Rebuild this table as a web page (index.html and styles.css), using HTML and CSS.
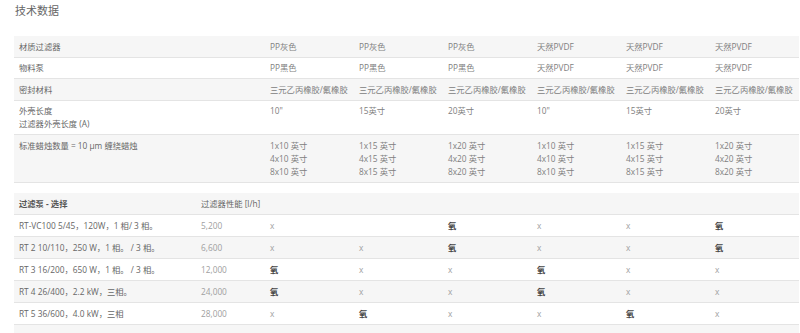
FILE: index.html
```html
<!DOCTYPE html>
<html lang="zh-CN">
<head>
    <meta charset="UTF-8">
    <title>技术数据</title>
    <link rel="stylesheet" href="styles.css">
</head>
<body>
    <div class="tech-data">
        <h2>技术数据</h2>

        <table class="spec-table">
            <colgroup>
                <col class="col-label">
                <col><col><col><col><col><col>
            </colgroup>
            <tr>
                <td class="label">材质过滤器</td>
                <td>PP灰色</td><td>PP灰色</td><td>PP灰色</td>
                <td>天然PVDF</td><td>天然PVDF</td><td>天然PVDF</td>
            </tr>
            <tr>
                <td class="label">物料泵</td>
                <td>PP黑色</td><td>PP黑色</td><td>PP黑色</td>
                <td>天然PVDF</td><td>天然PVDF</td><td>天然PVDF</td>
            </tr>
            <tr>
                <td class="label">密封材料</td>
                <td>三元乙丙橡胶/氟橡胶</td><td>三元乙丙橡胶/氟橡胶</td><td>三元乙丙橡胶/氟橡胶</td>
                <td>三元乙丙橡胶/氟橡胶</td><td>三元乙丙橡胶/氟橡胶</td><td>三元乙丙橡胶/氟橡胶</td>
            </tr>
            <tr>
                <td class="label">外壳长度<br>过滤器外壳长度 (A)</td>
                <td>10"</td><td>15英寸</td><td>20英寸</td>
                <td>10"</td><td>15英寸</td><td>20英寸</td>
            </tr>
            <tr>
                <td class="label">标准蜡烛数量 = 10 μm 缠绕蜡烛</td>
                <td>1x10 英寸<br>4x10 英寸<br>8x10 英寸</td>
                <td>1x15 英寸<br>4x15 英寸<br>8x15 英寸</td>
                <td>1x20 英寸<br>4x20 英寸<br>8x20 英寸</td>
                <td>1x10 英寸<br>4x10 英寸<br>8x10 英寸</td>
                <td>1x15 英寸<br>4x15 英寸<br>8x15 英寸</td>
                <td>1x20 英寸<br>4x20 英寸<br>8x20 英寸</td>
            </tr>
        </table>

        <table class="spec-table pump-table">
            <colgroup>
                <col class="col-pump">
                <col class="col-perf">
                <col><col><col><col><col><col>
            </colgroup>
            <tr class="head">
                <td class="label"><strong>过滤泵 - 选择</strong></td>
                <td class="label">过滤器性能 [l/h]</td>
                <td></td><td></td><td></td><td></td><td></td><td></td>
            </tr>
            <tr>
                <td class="label">RT-VC100 5/45，120W，1 相/ 3 相。</td><td>5,200</td>
                <td>x</td><td></td><td class="yes">氧</td><td>x</td><td>x</td><td class="yes">氧</td>
            </tr>
            <tr>
                <td class="label">RT 2 10/110，250 W，1 相。 / 3 相。</td><td>6,600</td>
                <td>x</td><td>x</td><td class="yes">氧</td><td>x</td><td>x</td><td class="yes">氧</td>
            </tr>
            <tr>
                <td class="label">RT 3 16/200，650 W，1 相。 / 3 相。</td><td>12,000</td>
                <td class="yes">氧</td><td>x</td><td>x</td><td class="yes">氧</td><td>x</td><td>x</td>
            </tr>
            <tr>
                <td class="label">RT 4 26/400，2.2 kW，三相。</td><td>24,000</td>
                <td class="yes">氧</td><td>x</td><td>x</td><td class="yes">氧</td><td>x</td><td>x</td>
            </tr>
            <tr>
                <td class="label">RT 5 36/600，4.0 kW，三相</td><td>28,000</td>
                <td>x</td><td class="yes">氧</td><td>x</td><td>x</td><td class="yes">氧</td><td>x</td>
            </tr>
            <tr>
                <td>&nbsp;</td><td></td><td></td><td></td><td></td><td></td><td></td><td></td>
            </tr>
        </table>
    </div>
</body>
</html>
```

FILE: styles.css
```css
* {
    margin: 0;
    padding: 0;
    box-sizing: border-box;
}

body {
    font-family: "Open Sans", "Noto Sans CJK SC", sans-serif;
    background-color: #ffffff;
    color: #808080;
}

.tech-data {
    padding: 0 1px 0 14px;
}

.tech-data h2 {
    font-family: "Noto Sans CJK SC", sans-serif;
    font-size: 11px;
    font-weight: 400;
    line-height: 16px;
    color: #666666;
    margin: 2px 0 18px 1px;
}

.spec-table {
    width: 100%;
    border-collapse: collapse;
    table-layout: fixed;
    font-size: 8.3px;
    line-height: 13px;
}

.spec-table td {
    padding: 3.75px 5px;
    vertical-align: top;
    text-align: left;
    border-bottom: 1px solid #e4e4e4;
    white-space: nowrap;
    overflow: hidden;
}

.spec-table tr:nth-child(odd) td {
    background-color: #f6f6f6;
}

.spec-table .label {
    color: #666666;
}

.col-label {
    width: 251px;
}

.pump-table {
    margin-top: 10.5px;
}

.pump-table td {
    padding: 4px 5px;
    color: #a0a0a0;
}

.col-pump {
    width: 182px;
}

.col-perf {
    width: 69px;
}

.pump-table .head strong {
    font-weight: 700;
    color: #555555;
}

.pump-table .yes {
    color: #444444;
    font-weight: 600;
}
```
